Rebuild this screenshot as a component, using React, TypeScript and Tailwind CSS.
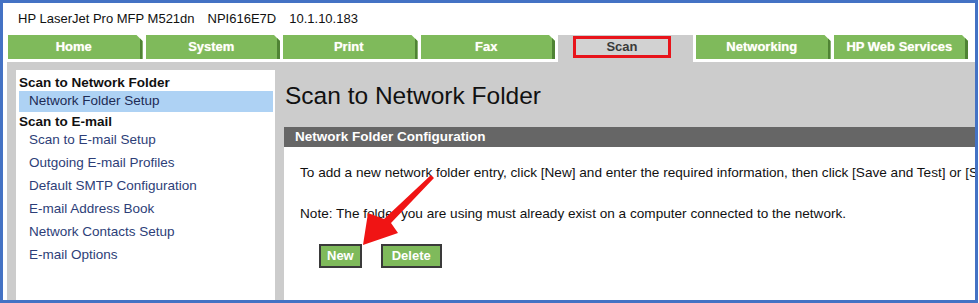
import React from "react";

const tabs = ["Home", "System", "Print", "Fax", "Scan", "Networking", "HP Web Services"];

const sideLinks = [
  "Scan to E-mail Setup",
  "Outgoing E-mail Profiles",
  "Default SMTP Configuration",
  "E-mail Address Book",
  "Network Contacts Setup",
  "E-mail Options",
];

function Tab({ label }: { label: string }) {
  // selected tab is gray and carries the red annotation box
  if (label === "Scan") {
    return (
      <div className="w-[135px] h-[27px] bg-[#cccccc] flex items-start pl-[15px] pt-[1px]">
        <div className="w-[98px] h-[22px] border-[3px] border-[#e8141b] bg-[#d2d2d2] flex items-center justify-center text-[13px] font-bold text-[#3a3a3a]">
          Scan
        </div>
      </div>
    );
  }
  return (
    <div className="w-[134.5px] h-[24px] bg-[#7fba5b] border-r-[3px] border-[#4f8334] [clip-path:polygon(0_0,calc(100%-6px)_0,100%_6px,100%_100%,0_100%)] flex items-center justify-center text-[13px] font-bold text-white [text-shadow:0_0_1px_#dfe9b0]">
      {label}
    </div>
  );
}

export default function App() {
  return (
    <div className="relative w-[978px] h-[303px] border-[3px] border-[#4472c4] bg-white overflow-hidden font-['Liberation_Sans',Arial,sans-serif]">
      {/* Kopf: Gerätename */}
      <div className="h-[32px] pl-[15px] flex items-center gap-[13px] text-[13px] text-[#111]">
        <span>HP LaserJet Pro MFP M521dn</span>
        <span>NPI616E7D</span>
        <span>10.1.10.183</span>
      </div>

      {/* Tabs */}
      <div className="pl-[5px] flex items-start gap-[3px] h-[27px]">
        {tabs.map((t) => (
          <Tab key={t} label={t} />
        ))}
      </div>

      {/* Inhalt */}
      <div className="ml-[4px] bg-[#cccccc] flex h-[240px]">
        {/* Sidebar */}
        <div className="shrink-0 ml-[9px] mt-[8px] w-[259px] bg-white pt-[4px] pl-[3px] pr-[2px] text-[13.5px]">
          <div className="font-bold text-[#111] leading-[17px]">Scan to Network Folder</div>
          <div className="h-[21px] bg-[#aed2f4] flex items-center pl-[10px] text-[#1d2b55]">Network Folder Setup</div>
          <div className="font-bold text-[#111] leading-[17px] mt-[1px]">Scan to E-mail</div>
          <div className="flex flex-col gap-[6px] pl-[10px] mt-[1px]">
            {sideLinks.map((l) => (
              <div key={l} className="leading-[17px] text-[#2d3e78]">{l}</div>
            ))}
          </div>
        </div>

        {/* Hauptbereich */}
        <div className="ml-[9px] flex-1 min-w-0 overflow-hidden flex flex-col">
          <div className="h-[65px] pl-[1px] flex items-center text-[24.5px] text-[#111] pt-[4px]">Scan to Network Folder</div>
          <div className="h-[20px] bg-[#666666] flex items-center pl-[11px] text-[13.5px] font-bold text-white">
            Network Folder Configuration
          </div>
          <div className="flex-1 bg-white pl-[16px] pt-[16px] text-[13.6px] text-[#111] whitespace-nowrap">
            <div>To add a new network folder entry, click [New] and enter the required information, then click [Save and Test] or [Save Only].</div>
            <div className="mt-[21px]">Note: The folder you are using must already exist on a computer connected to the network.</div>
            <div className="mt-[19px] ml-[19px] flex gap-[19px]">
              <button className="h-[24px] px-[6px] bg-[#7fba5b] border-2 border-[#3a3a3a] text-white font-bold text-[13px]">New</button>
              <button className="h-[24px] px-[9px] bg-[#7fba5b] border-2 border-[#3a3a3a] text-white font-bold text-[13px]">Delete</button>
            </div>
          </div>
        </div>
      </div>

      {/* roter Pfeil (Anmerkung) */}
      <svg className="absolute left-0 top-0 pointer-events-none" width="978" height="303" viewBox="3 3 978 303">
        <polygon
          points="431,175 434,178 391,223 398,233 363,245 368,213 384,219"
          fill="#f01414"
        />
      </svg>
    </div>
  );
}
